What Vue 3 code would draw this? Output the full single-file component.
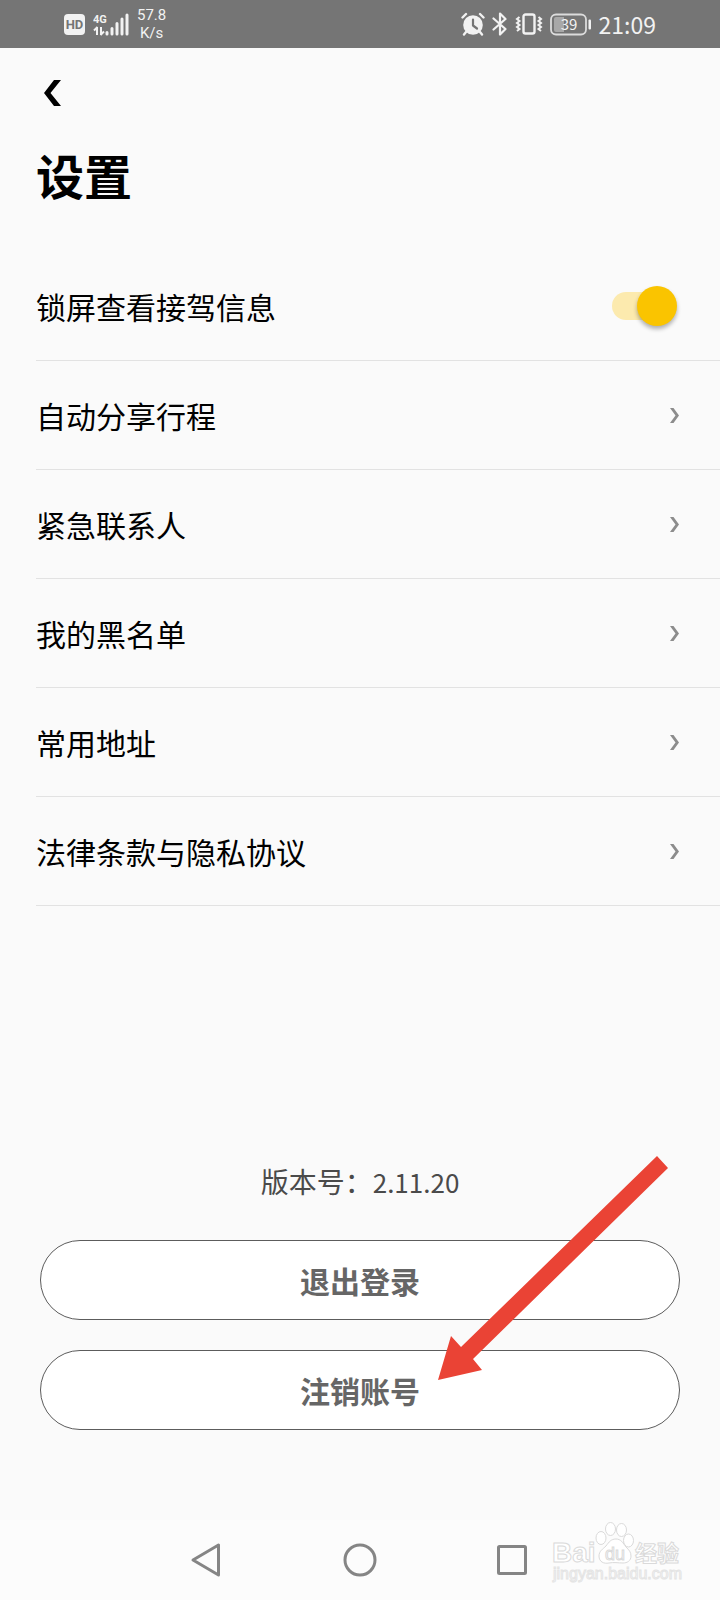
<script setup>
import { ref } from 'vue';

// 锁屏查看接驾信息 开关
const lockScreen = ref(true);

// 可跳转的设置项
const links = [
  { id: 'share', label: '自动分享行程' },
  { id: 'contacts', label: '紧急联系人' },
  { id: 'blacklist', label: '我的黑名单' },
  { id: 'address', label: '常用地址' },
  { id: 'terms', label: '法律条款与隐私协议' },
];

const version = '2.11.20';
</script>

<template>
  <div class="screen">
    <div class="status-bar">
      <div class="status-left">
        <span class="hd">HD</span>
        <svg class="signal" width="36" height="24" viewBox="0 0 36 24">
          <text x="0" y="11" class="signal-text">4G</text>
          <path
            d="M4 15v8M4.500 15L1 18.500M8 15v8M7.500 23l3.500-3.500"
            fill="none"
            stroke="#f2f2f2"
            stroke-width="2"
          />
          <path
            d="M14 20.500v1.500M19 16.500v5.500M24 11.500v10.500M29 7v15M34 3v19"
            stroke="#f2f2f2"
            stroke-width="3"
            stroke-linecap="round"
          />
        </svg>
        <span class="speed"><span>57.8</span><span>K/s</span></span>
      </div>

      <div class="status-right">
        <svg width="24" height="24" viewBox="0 0 24 24">
          <circle cx="12" cy="13" r="9.800" fill="#f2f2f2" />
          <path
            d="M1.500 5.500L5 2M22.500 5.500L19 2M5 20l-2 2.500M19 20l2 2.500"
            stroke="#f2f2f2"
            stroke-width="2.400"
            stroke-linecap="round"
          />
          <path
            d="M12 7.500V13.500l4 3"
            fill="none"
            stroke="#757575"
            stroke-width="2.200"
            stroke-linecap="round"
            stroke-linejoin="round"
          />
        </svg>
        <svg width="16" height="24" viewBox="0 0 16 24">
          <path
            d="M1.500 6.500L13.500 17L8 22.500V1.500L13.500 7L1.500 17.500"
            fill="none"
            stroke="#f2f2f2"
            stroke-width="2.200"
            stroke-linejoin="round"
            stroke-linecap="round"
          />
        </svg>
        <svg width="28" height="24" viewBox="0 0 28 24">
          <rect
            x="8.500"
            y="2.500"
            width="11"
            height="19"
            rx="2"
            fill="none"
            stroke="#f2f2f2"
            stroke-width="2.400"
          />
          <path
            d="M4.500 5l-2.500 2l2.500 2l-2.500 2l2.500 2l-2.500 2l2.500 2l-2.500 2M23.500 5l2.500 2l-2.500 2l2.500 2l-2.500 2l2.500 2l-2.500 2l2.500 2"
            fill="none"
            stroke="#f2f2f2"
            stroke-width="2"
          />
        </svg>
        <svg width="42" height="24" viewBox="0 0 42 24">
          <rect
            x="1"
            y="2.500"
            width="35"
            height="20"
            rx="5"
            fill="none"
            stroke="#dcdcdc"
            stroke-width="1.800"
          />
          <path d="M6 5h8v15H6a2 2 0 0 1-2-2V7a2 2 0 0 1 2-2z" fill="#a8a8a8" />
          <rect x="38.500" y="7.500" width="2.500" height="10" rx="1" fill="#f2f2f2" />
          <text x="19" y="18" text-anchor="middle" class="battery-text">39</text>
        </svg>
        <span class="time">21:09</span>
      </div>
    </div>

    <header class="header">
      <button type="button" class="back" aria-label="返回">
        <svg width="17" height="26" viewBox="0 0 17 26">
          <polygon points="10,0 17,0 6.500,13 17,26 10,26 0,13" fill="#000000" />
        </svg>
      </button>
      <h1 class="title">设置</h1>
    </header>

    <main class="content">
      <div class="list">
        <label class="row" for="lock-screen">
          <span>锁屏查看接驾信息</span>
          <input id="lock-screen" v-model="lockScreen" type="checkbox" class="switch" />
        </label>
        <a v-for="item in links" :key="item.id" class="row" :href="`#${item.id}`">
          <span>{{ item.label }}</span>
          <svg width="10" height="16" viewBox="0 0 10 16">
            <polygon points="0,1 3.500,1 9,8.500 3.500,16 0,16 5.500,8.500" fill="#8c8c8c" />
          </svg>
        </a>
      </div>

      <p class="version">版本号：<span class="version-number">{{ version }}</span></p>

      <div class="actions">
        <button type="button" class="action">退出登录</button>
        <button type="button" class="action">注销账号</button>
        <svg class="arrow" width="230" height="224" viewBox="0 0 230 224">
          <polygon
            points="219,0 230,12 35,203 44,214 0,224 13,180 23,191"
            fill="#ea4335"
          />
        </svg>
      </div>
    </main>

    <nav class="nav-bar">
      <button type="button" class="nav-btn" aria-label="返回">
        <svg width="36" height="36" viewBox="0 0 36 36">
          <path d="M28.500 3v30L3 18z" />
        </svg>
      </button>
      <button type="button" class="nav-btn" aria-label="主页">
        <svg width="36" height="36" viewBox="0 0 36 36">
          <circle cx="18" cy="18" r="15" />
        </svg>
      </button>
      <button type="button" class="nav-btn" aria-label="最近任务">
        <svg width="36" height="36" viewBox="0 0 36 36">
          <rect x="4.500" y="4.500" width="27" height="27" rx="1" />
        </svg>
      </button>
    </nav>

    <!-- 水印 -->
    <svg class="watermark" width="136" height="72" viewBox="0 0 136 72">
      <g fill="#ffffff" stroke="#dadada" stroke-width="1">
        <text x="2" y="44" class="wm-latin">Bai</text>
        <ellipse cx="51" cy="20" rx="5" ry="6.500" />
        <ellipse cx="60.500" cy="11" rx="5" ry="6.500" />
        <ellipse cx="71.500" cy="12" rx="5" ry="6.500" />
        <ellipse cx="78.500" cy="22.500" rx="5" ry="6.500" />
        <path
          d="M66 21c5 0 7 4 10 8c3 3 5 5 5 9c0 5-4 7-8 7c-5 0-9-1-14 0c-5 1-10-1-10-7c0-5 4-7 7-10c3-4 5-7 10-7z"
        />
        <text x="55" y="42" class="wm-du">du</text>
        <text x="85" y="43" class="wm-cjk">经验</text>
      </g>
      <text x="3" y="61" class="wm-url">jingyan.baidu.com</text>
    </svg>
  </div>
</template>

<style>
body {
  margin: 0;
  background-color: #fafafa;
}
</style>

<style scoped>
.screen {
  position: relative;
  display: flex;
  flex-direction: column;
  min-height: 100vh;
  background-color: #fafafa;
  color: #000000;
  font-family: 'Noto Sans CJK SC', sans-serif;
}

.status-bar {
  display: flex;
  align-items: center;
  justify-content: space-between;
  height: 48px;
  padding: 0 64px;
  background-color: #757575;
  color: #f2f2f2;
}

.status-left,
.status-right {
  display: flex;
  align-items: center;
  gap: 8px;
}

.status-right {
  gap: 7px;
}

.hd {
  width: 21px;
  border-radius: 4px;
  background-color: #f2f2f2;
  color: #757575;
  font-family: Roboto, sans-serif;
  font-size: 13px;
  font-weight: 700;
  line-height: 21px;
  text-align: center;
}

.signal-text {
  fill: #f2f2f2;
  font-family: Roboto, sans-serif;
  font-size: 11px;
  font-weight: 700;
}

.speed {
  display: flex;
  flex-direction: column;
  align-items: center;
  font-family: Roboto, sans-serif;
  font-size: 15px;
  line-height: 18px;
}

.battery-text {
  fill: #f2f2f2;
  font-size: 15px;
}

.time {
  font-size: 23px;
  line-height: 24px;
}

.header {
  padding: 32px 36px 0;
}

.back {
  display: block;
  margin-left: 8px;
  padding: 0;
  border: none;
  background: none;
  cursor: pointer;
}

.back svg {
  display: block;
}

.title {
  margin: 34px 0 0;
  font-size: 48px;
  font-weight: 700;
  line-height: 68px;
}

.content {
  flex: 1;
  display: flex;
  flex-direction: column;
  padding: 44px 0 90px;
}

.list {
  margin-left: 36px;
}

.row {
  display: flex;
  align-items: center;
  justify-content: space-between;
  height: 108px;
  padding-right: 40px;
  border-bottom: 1px solid #e2e2e2;
  color: #000000;
  font-size: 30px;
  line-height: 44px;
  text-decoration: none;
  cursor: pointer;
}

.switch {
  position: relative;
  appearance: none;
  width: 60px;
  height: 28px;
  margin: 0 8px 0 0;
  border-radius: 14px;
  background-color: #dddddd;
  cursor: pointer;
}

.switch::before {
  content: '';
  position: absolute;
  top: -6px;
  left: -5px;
  width: 40px;
  height: 40px;
  border-radius: 50%;
  background-color: #ffffff;
  box-shadow: 0 3px 4px rgba(0, 0, 0, 0.3);
}

.switch:checked {
  background-color: #fceaae;
}

.switch:checked::before {
  left: 25px;
  background-color: #fac400;
}

.version {
  margin: auto 0 38px;
  color: #4a4a4a;
  font-size: 28px;
  line-height: 40px;
  text-align: center;
}

.version-number {
  font-size: 26px;
}

.actions {
  position: relative;
  display: flex;
  flex-direction: column;
  gap: 30px;
  margin: 0 40px;
}

.action {
  height: 80px;
  border: 1px solid #5c5c5c;
  border-radius: 40px;
  background-color: #ffffff;
  color: #666666;
  font-family: inherit;
  font-size: 30px;
  font-weight: 700;
  cursor: pointer;
}

/* 指向注销账号的标注箭头 */
.arrow {
  position: absolute;
  top: -84px;
  right: 12px;
  pointer-events: none;
}

.nav-bar {
  display: flex;
  align-items: center;
  justify-content: center;
  gap: 116px;
  height: 80px;
  background-color: #fcfcfc;
}

.nav-btn {
  padding: 0;
  border: none;
  background: none;
  cursor: pointer;
}

.nav-btn svg {
  display: block;
  fill: none;
  stroke: #858585;
  stroke-width: 3;
  stroke-linejoin: round;
}

.watermark {
  position: absolute;
  right: 34px;
  bottom: 10px;
  pointer-events: none;
}

.wm-latin {
  font-family: 'Liberation Sans', sans-serif;
  font-size: 28px;
  font-weight: 700;
}

.wm-du {
  font-family: 'Liberation Sans', sans-serif;
  font-size: 18px;
}

.wm-cjk {
  font-size: 22px;
  font-weight: 700;
}

.wm-url {
  fill: #fcfcfc;
  stroke: #e4e4e4;
  stroke-width: 1px;
  font-family: 'Liberation Sans', sans-serif;
  font-size: 16px;
}
</style>
